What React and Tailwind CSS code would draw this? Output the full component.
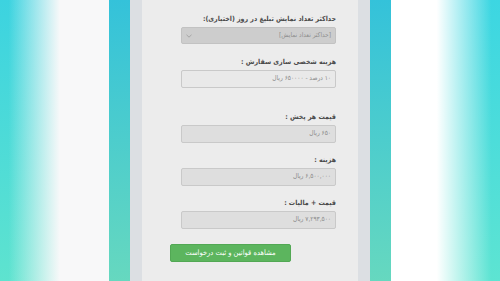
// App.jsx — فرم ثبت سفارش تبلیغ (نمای گوشی با پس‌زمینه محو)

const FONT = "font-['DejaVu_Sans_Condensed','DejaVu_Sans',sans-serif]";

const fields = [
  { label: 'هزینه شخصی سازی سفارش :', value: '۱۰ درصد - ۶۵۰۰۰۰ ریال', bg: 'bg-[#e9e9e9]', gapTop: 'mt-[12px]' },
  { label: 'قیمت هر پخش :', value: '۶۵۰ ریال', bg: 'bg-[#dedede]', gapTop: 'mt-[23px]' },
  { label: 'هزینه :', value: '۶,۵۰۰,۰۰۰ ریال', bg: 'bg-[#dedede]', gapTop: 'mt-[11px]' },
  { label: 'قیمت + مالیات :', value: '۷,۲۹۳,۵۰۰ ریال', bg: 'bg-[#dedede]', gapTop: 'mt-[11px]' },
];

function Label({ children }) {
  return (
    <div className="h-[12px] text-[7px] leading-[12px] font-bold text-[#4a4a4a] text-right whitespace-nowrap">
      {children}
    </div>
  );
}

function Field({ label, value, bg, gapTop }) {
  return (
    <div className={`${gapTop} flex flex-col gap-[2px]`}>
      <Label>{label}</Label>
      <div className={`h-[18px] ${bg} border border-[#c9c9c9] rounded-[2px] flex items-center px-[4px] text-[6.5px] text-[#8a8a8a]`}>
        {value}
      </div>
    </div>
  );
}

export default function App() {
  return (
    <div className={`w-[500px] h-[281px] flex overflow-hidden ${FONT}`}>
      {/* چپ: پس‌زمینه محو */}
      <div className="w-[109px] h-full bg-[linear-gradient(to_right,rgba(255,255,255,0)_8%,#f8f8f9_55%),linear-gradient(to_bottom,#3cd3e0,#5ee3cf)]" />
      <div className="w-[21px] h-full bg-[linear-gradient(to_bottom,#34c2da,#66d8bf)]" />
      <div className="w-[12px] h-full bg-[#dcdfe3]" />

      {/* پنل فرم */}
      <div dir="rtl" className="w-[216px] h-full bg-[#ececec] pt-[13px] pr-[22px] pl-[39px]">
        <div className="flex flex-col gap-[2px]">
          <Label>حداکثر تعداد نمایش تبلیغ در روز (اختیاری):</Label>
          <div className="h-[17px] bg-[#cdcdcd] border border-[#c2c2c2] rounded-[2px] flex items-center justify-between px-[4px] text-[6.5px] text-[#8d8d8d]">
            <span>[حداکثر تعداد نمایش]</span>
            <svg width="6" height="4" viewBox="0 0 6 4" fill="none">
              <path d="M0.5 0.8 L3 3.2 L5.5 0.8" stroke="#9a9a9a" strokeWidth="0.8" />
            </svg>
          </div>
        </div>

        {fields.map((f) => (
          <Field key={f.label} {...f} />
        ))}

        <div className="mt-[15px] -ml-[11px] flex justify-end">
          <button className="w-[121px] h-[18px] rounded-[2px] bg-[#5cb55e] border border-[#52a854] text-white text-[7.5px] flex items-center justify-center">
            مشاهده قوانین و ثبت درخواست
          </button>
        </div>
      </div>

      <div className="w-[12px] h-full bg-[#dcdfe3]" />
      <div className="w-[21px] h-full bg-[linear-gradient(to_bottom,#34c2da,#66d8bf)]" />
      {/* راست: پس‌زمینه محو */}
      <div className="w-[109px] h-full bg-[linear-gradient(to_left,rgba(255,255,255,0)_8%,#ffffff_58%),linear-gradient(to_bottom,#3cd6e2,#5de4d2)]" />
    </div>
  );
}
